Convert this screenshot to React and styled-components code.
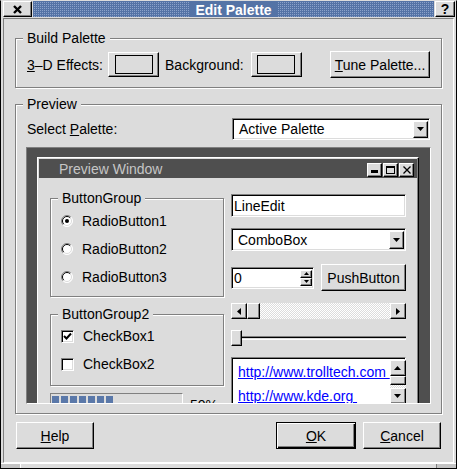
import styled, { createGlobalStyle, css } from "styled-components"

const GlobalStyle = createGlobalStyle`
  *, *::before, *::after { box-sizing: border-box; }
  html, body { margin: 0; padding: 0; background: #dcdcdc; }
  body {
    font-family: "Liberation Sans", Arial, Helvetica, sans-serif;
    font-size: 14px;
    color: #000;
  }
`

const raised = css`
  border: 1px solid;
  border-color: #fff #000 #000 #fff;
  box-shadow: inset -1px -1px 0 #808080;
  background: #dcdcdc;
`

const sunken = css`
  border: 1px solid;
  border-color: #808080 #fff #fff #808080;
  box-shadow: inset 1px 1px 0 #000, inset -1px -1px 0 #dcdcdc;
  background: #fff;
`

const dither = css`
  background: repeating-conic-gradient(#fff 0 25%, #dcdcdc 0 50%) 0 0 / 2px 2px;
`

const Window = styled.div`
  width: 457px;
  height: 469px;
  display: flex;
  flex-direction: column;
  border: 1px solid #000;
  border-top-color: #dcdcdc;
  padding: 0 2px;
  background: #dcdcdc;
  overflow: hidden;
`

const TitleBar = styled.div`
  height: 16px;
  flex-shrink: 0;
  margin: 0 -1px 1px 0;
  display: flex;
  gap: 1px;
`

const TitleButton = styled.div`
  ${raised}
  width: ${p => p.$w}px;
  display: flex;
  align-items: center;
  justify-content: center;
  font-weight: bold;
  line-height: 14px;
`

const CaptionBar = styled.div`
  flex: 1;
  display: flex;
  justify-content: center;
  background-color: #5473a6;
  background-image:
    linear-gradient(90deg, #5473a6 1px, transparent 1px),
    linear-gradient(#5473a6 1px, #8ba2ca 1px);
  background-size: 2px 2px;
`

const Caption = styled.span`
  height: 16px;
  padding: 1px 5px 0;
  line-height: 16px;
  background: #5473a6;
  color: #fff;
  font-weight: bold;
  white-space: nowrap;
`

const Body = styled.div`
  height: 445px;
  flex-shrink: 0;
  display: flex;
  flex-direction: column;
  border: 1px solid;
  border-color: #808080 #fff #fff #808080;
  padding: 0 11px;
`

const GroupBox = styled.div`
  margin-top: ${p => p.$top}px;
  height: ${p => p.$h}px;
  flex-shrink: 0;
  display: flex;
  flex-direction: column;
  border: 1px solid #808080;
  box-shadow: inset 1px 1px 0 #fff, 1px 1px 0 #fff;
`

const Legend = styled.span`
  align-self: flex-start;
  height: 16px;
  line-height: 16px;
  margin: -9px 0 0 7px;
  padding: 0 4px;
  background: #dcdcdc;
  white-space: nowrap;
`

const Row = styled.div`
  display: flex;
  align-items: center;
  flex-shrink: 0;
  height: ${p => p.$h}px;
  margin-top: ${p => p.$top}px;
  padding: 0 11px;
`

const Label = styled.span`
  white-space: nowrap;
  margin-left: ${p => p.$ml ?? 0}px;
`

const Button = styled.div`
  ${raised}
  width: ${p => p.$w}px;
  height: ${p => p.$h ?? 27}px;
  margin-left: ${p => p.$ml ?? "0"};
  flex-shrink: 0;
  display: flex;
  align-items: center;
  justify-content: center;
  white-space: nowrap;
  ${p => p.$default && css`
    border-color: #000;
    box-shadow: inset 1px 1px 0 #fff, inset -1px -1px 0 #000, inset -2px -2px 0 #808080;
  `}
`

const Swatch = styled.div`
  width: 38px;
  height: 19px;
  border: 1px solid #000;
  background: #dcdcdc;
`

const ComboField = styled.div`
  ${sunken}
  width: ${p => p.$w}px;
  height: ${p => p.$h}px;
  margin-left: ${p => p.$ml ?? "0"};
  flex-shrink: 0;
  display: flex;
  align-items: center;
  padding: 2px 1px 2px ${p => p.$pl}px;
`

const ComboText = styled.span`
  flex: 1;
  white-space: nowrap;
`

const ArrowButton = styled.div`
  ${raised}
  width: ${p => p.$w ?? 16}px;
  height: ${p => p.$h ?? 16}px;
  flex-shrink: 0;
  display: flex;
  align-items: center;
  justify-content: center;
`

const Workspace = styled.div`
  margin: 7px 10px 0;
  height: 257px;
  flex-shrink: 0;
  border: 1px solid;
  border-color: #808080 #fff #fff #808080;
  background: #4f4f4f;
  padding: 9px 0 0 10px;
  overflow: hidden;
`

const MdiWindow = styled.div`
  width: 382px;
  height: 270px;
  border: 1px solid;
  border-color: #fff #000 #000 #fff;
  box-shadow: inset -1px -1px 0 #808080;
  padding: 1px;
  background: #dcdcdc;
`

const MdiTitle = styled.div`
  height: 19px;
  display: flex;
  align-items: center;
  padding: 0 3px 0 20px;
  background: #4f4f4f;
  color: #c6c6c6;
  white-space: nowrap;
`

const MdiButtons = styled.div`
  margin-left: auto;
  align-self: flex-end;
  margin-bottom: 1px;
  display: flex;
  gap: 1px;
`

const MdiButton = styled.div`
  ${raised}
  width: 15px;
  height: 14px;
  display: flex;
  align-items: center;
  justify-content: center;
`

const MdiBody = styled.div`
  display: flex;
  gap: 7px;
  padding: 0 11px;
`

const Column = styled.div`
  width: ${p => p.$w}px;
  flex-shrink: 0;
  display: flex;
  flex-direction: column;
`

const OptionRow = styled.div`
  height: 20px;
  flex-shrink: 0;
  margin-top: ${p => p.$top}px;
  padding-left: 10px;
  display: flex;
  align-items: center;
  gap: 9px;
  white-space: nowrap;
`

const CheckBox = styled.div`
  ${sunken}
  width: 13px;
  height: 13px;
  display: flex;
  align-items: center;
  justify-content: center;
`

const ProgressRow = styled.div`
  margin-top: 7px;
  display: flex;
  align-items: center;
  gap: 7px;
`

const ProgressBar = styled.div`
  width: 133px;
  height: 23px;
  flex-shrink: 0;
  border: 1px solid;
  border-color: #808080 #fff #fff #808080;
  padding: 2px 1px;
  display: flex;
  gap: 2px;
`

const Block = styled.div`
  width: 7px;
  background: #5a78a9;
`

const LineEdit = styled.div`
  ${sunken}
  height: 23px;
  margin-top: ${p => p.$top}px;
  flex-shrink: 0;
  display: flex;
  align-items: center;
  padding-left: ${p => p.$pl ?? 2}px;
  width: ${p => (p.$w ? `${p.$w}px` : "auto")};
`

const SpinRow = styled.div`
  height: 27px;
  margin-top: 13px;
  flex-shrink: 0;
  display: flex;
  align-items: center;
`

const SpinField = styled(LineEdit)`
  height: 22px;
  padding-right: 1px;
`

const SpinButtons = styled.div`
  margin-left: auto;
  display: flex;
  flex-direction: column;
`

const SpinButton = styled.div`
  ${raised}
  width: 12px;
  height: 8px;
  display: flex;
  align-items: center;
  justify-content: center;
`

const ScrollBar = styled.div`
  height: 16px;
  margin-top: 12px;
  flex-shrink: 0;
  display: flex;
`

const Track = styled.div`
  flex: 1;
  ${dither}
`

const Thumb = styled.div`
  ${raised}
  width: ${p => p.$w ?? 16}px;
  height: ${p => p.$h ?? 16}px;
  flex-shrink: 0;
`

const Slider = styled.div`
  height: 16px;
  margin-top: 11px;
  flex-shrink: 0;
  display: flex;
  align-items: center;
`

const Groove = styled.div`
  flex: 1;
  height: 4px;
  border-top: 1px solid #808080;
  border-bottom: 1px solid #fff;
  box-shadow: inset 0 1px 0 #000;
  background: #dcdcdc;
`

const ListBox = styled.div`
  ${sunken}
  height: 50px;
  margin-top: 11px;
  flex-shrink: 0;
  display: flex;
  padding: 2px 1px 2px 2px;
`

const ListItems = styled.div`
  flex: 1;
  padding-left: 4px;
`

const Link = styled.div`
  height: 24px;
  line-height: 24px;
  color: #0000ff;
  text-decoration: underline;
  white-space: pre;
`

const VScroll = styled.div`
  width: 16px;
  display: flex;
  flex-direction: column;
`

const VTrack = styled.div`
  flex: 1;
  ${dither}
`

const ButtonRow = styled.div`
  height: 27px;
  margin-top: 8px;
  flex-shrink: 0;
  padding: 0 1px;
  display: flex;
`

const ResizeBar = styled.div`
  height: 5px;
  flex-shrink: 0;
  margin: 0 -2px;
  display: flex;
  border-top: 1px solid #fff;
`

const Grip = styled.div`
  width: ${p => (p.$w ? `${p.$w}px` : "auto")};
  flex: ${p => (p.$w ? "none" : "1")};
  border-right: ${p => (p.$line ? "1px solid #fff" : "none")};
  border-left: ${p => (p.$lineLeft ? "1px solid #808080" : "none")};
  background: ${p => p.$bg ?? "#dcdcdc"};
`

const Tri = ({ dir, w = 7, h = 4 }) => {
  const vw = dir === "up" || dir === "down" ? w : h
  const vh = dir === "up" || dir === "down" ? h : w
  const pts = {
    down: `0,0 ${w},0 ${w / 2},${h}`,
    up: `0,${h} ${w},${h} ${w / 2},0`,
    left: `${h},0 ${h},${w} 0,${w / 2}`,
    right: `0,0 0,${w} ${h},${w / 2}`,
  }
  return (
    <svg width={vw} height={vh} viewBox={`0 0 ${vw} ${vh}`}>
      <polygon points={pts[dir]} fill="#000" />
    </svg>
  )
}

const Radio = ({ checked }) => (
  <svg width="12" height="12" viewBox="0 0 12 12" style={{ flexShrink: 0 }}>
    <circle cx="6" cy="6" r="5.5" fill="#fff" />
    <path d="M2.1 9.9 A5.5 5.5 0 0 1 9.9 2.1" stroke="#808080" fill="none" />
    <path d="M2.8 9.2 A4.5 4.5 0 0 1 9.2 2.8" stroke="#000" fill="none" />
    <path d="M9.9 2.1 A5.5 5.5 0 0 1 2.1 9.9" stroke="#fff" fill="none" />
    <path d="M9.2 2.8 A4.5 4.5 0 0 1 2.8 9.2" stroke="#dcdcdc" fill="none" />
    {checked && <circle cx="6" cy="6" r="2" fill="#000" />}
  </svg>
)

const Check = ({ checked }) => (
  <CheckBox>
    {checked && (
      <svg width="9" height="9" viewBox="0 0 9 9">
        <polyline points="1,4 3.5,6.5 8,1.5" fill="none" stroke="#000" strokeWidth="2" />
      </svg>
    )}
  </CheckBox>
)

const Combo = ({ w, h, pl, ml, children }) => (
  <ComboField $w={w} $h={h} $pl={pl} $ml={ml}>
    <ComboText>{children}</ComboText>
    <ArrowButton $w={15} $h={h - 5}>
      <Tri dir="down" />
    </ArrowButton>
  </ComboField>
)

const App = () => {
  return (
    <>
      <GlobalStyle />
      <Window>
        <TitleBar>
          <TitleButton $w={29}>
            <svg width="9" height="9" viewBox="0 0 9 9">
              <path d="M1 1 L8 8 M8 1 L1 8" stroke="#000" strokeWidth="2.4" />
            </svg>
          </TitleButton>
          <CaptionBar>
            <Caption>Edit Palette</Caption>
          </CaptionBar>
          <TitleButton $w={20}>?</TitleButton>
        </TitleBar>

        <Body>
          <GroupBox $top={19} $h={50}>
            <Legend>Build Palette</Legend>
            <Row $h={27} $top={5}>
              <Label><u>3</u>–D Effects:</Label>
              <Button $w={51} $h={25} $ml="5px">
                <Swatch />
              </Button>
              <Label $ml={6}>Back<u>g</u>round:</Label>
              <Button $w={51} $h={25} $ml="7px">
                <Swatch />
              </Button>
              <Button $w={100} $ml="auto">
                <span><u>T</u>une Palette...</span>
              </Button>
            </Row>
          </GroupBox>

          <GroupBox $top={16} $h={310}>
            <Legend>Preview</Legend>
            <Row $h={22} $top={6}>
              <Label>Select <u>P</u>alette:</Label>
              <Combo w={198} h={22} pl={6} ml="auto">Active Palette</Combo>
            </Row>
            <Workspace>
              <MdiWindow>
                <MdiTitle>
                  Preview Window
                  <MdiButtons>
                    <MdiButton>
                      <svg width="7" height="3" style={{ marginTop: 3 }}>
                        <rect width="7" height="3" fill="#000" />
                      </svg>
                    </MdiButton>
                    <MdiButton>
                      <svg width="9" height="8" viewBox="0 0 9 8">
                        <rect x="0.5" y="0.5" width="8" height="7" fill="none" stroke="#000" />
                        <rect width="9" height="2" fill="#000" />
                      </svg>
                    </MdiButton>
                    <MdiButton>
                      <svg width="8" height="8" viewBox="0 0 8 8">
                        <path d="M0.5 0.5 L7.5 7.5 M7.5 0.5 L0.5 7.5" stroke="#000" strokeWidth="1.3" />
                      </svg>
                    </MdiButton>
                  </MdiButtons>
                </MdiTitle>

                <MdiBody>
                  <Column $w={174}>
                    <GroupBox $top={20} $h={99}>
                      <Legend>ButtonGroup</Legend>
                      <OptionRow $top={5}><Radio checked />RadioButton1</OptionRow>
                      <OptionRow $top={8}><Radio />RadioButton2</OptionRow>
                      <OptionRow $top={8}><Radio />RadioButton3</OptionRow>
                    </GroupBox>
                    <GroupBox $top={17} $h={72}>
                      <Legend>ButtonGroup2</Legend>
                      <OptionRow $top={4}><Check checked />CheckBox1</OptionRow>
                      <OptionRow $top={8}><Check />CheckBox2</OptionRow>
                    </GroupBox>
                    <ProgressRow>
                      <ProgressBar>
                        {Array.from({ length: 7 }, (_, i) => <Block key={i} />)}
                      </ProgressBar>
                      <span>50%</span>
                    </ProgressRow>
                  </Column>

                  <Column $w={175}>
                    <LineEdit $top={16} $pl={2}>LineEdit</LineEdit>
                    <div style={{ marginTop: 11 }}>
                      <Combo w={175} h={23} pl={6}>ComboBox</Combo>
                    </div>
                    <SpinRow>
                      <SpinField $top={0} $w={83} $pl={2}>
                        0
                        <SpinButtons>
                          <SpinButton><Tri dir="up" w={5} h={3} /></SpinButton>
                          <SpinButton><Tri dir="down" w={5} h={3} /></SpinButton>
                        </SpinButtons>
                      </SpinField>
                      <Button $w={85} $ml="auto">PushButton</Button>
                    </SpinRow>
                    <ScrollBar>
                      <ArrowButton><Tri dir="left" /></ArrowButton>
                      <Thumb $w={13} />
                      <Track />
                      <ArrowButton><Tri dir="right" /></ArrowButton>
                    </ScrollBar>
                    <Slider>
                      <Thumb $w={11} />
                      <Groove />
                    </Slider>
                    <ListBox>
                      <ListItems>
                        <Link>{"http://www.trolltech.com\u00a0"}</Link>
                        <Link>{"http://www.kde.org\u00a0"}</Link>
                      </ListItems>
                      <VScroll>
                        <ArrowButton><Tri dir="up" /></ArrowButton>
                        <Thumb $h={9} />
                        <VTrack />
                        <ArrowButton><Tri dir="down" /></ArrowButton>
                      </VScroll>
                    </ListBox>
                  </Column>
                </MdiBody>
              </MdiWindow>
            </Workspace>
          </GroupBox>

          <ButtonRow>
            <Button $w={78}><span><u>H</u>elp</span></Button>
            <Button $w={80} $ml="auto" $default><span><u>O</u>K</span></Button>
            <Button $w={78} $ml="7px"><span><u>C</u>ancel</span></Button>
          </ButtonRow>
        </Body>

        <ResizeBar>
          <Grip $w={20} $line $bg="#c4c4c4" />
          <Grip />
          <Grip $w={20} $lineLeft $bg="#c4c4c4" />
        </ResizeBar>
      </Window>
    </>
  )
}

export default App
